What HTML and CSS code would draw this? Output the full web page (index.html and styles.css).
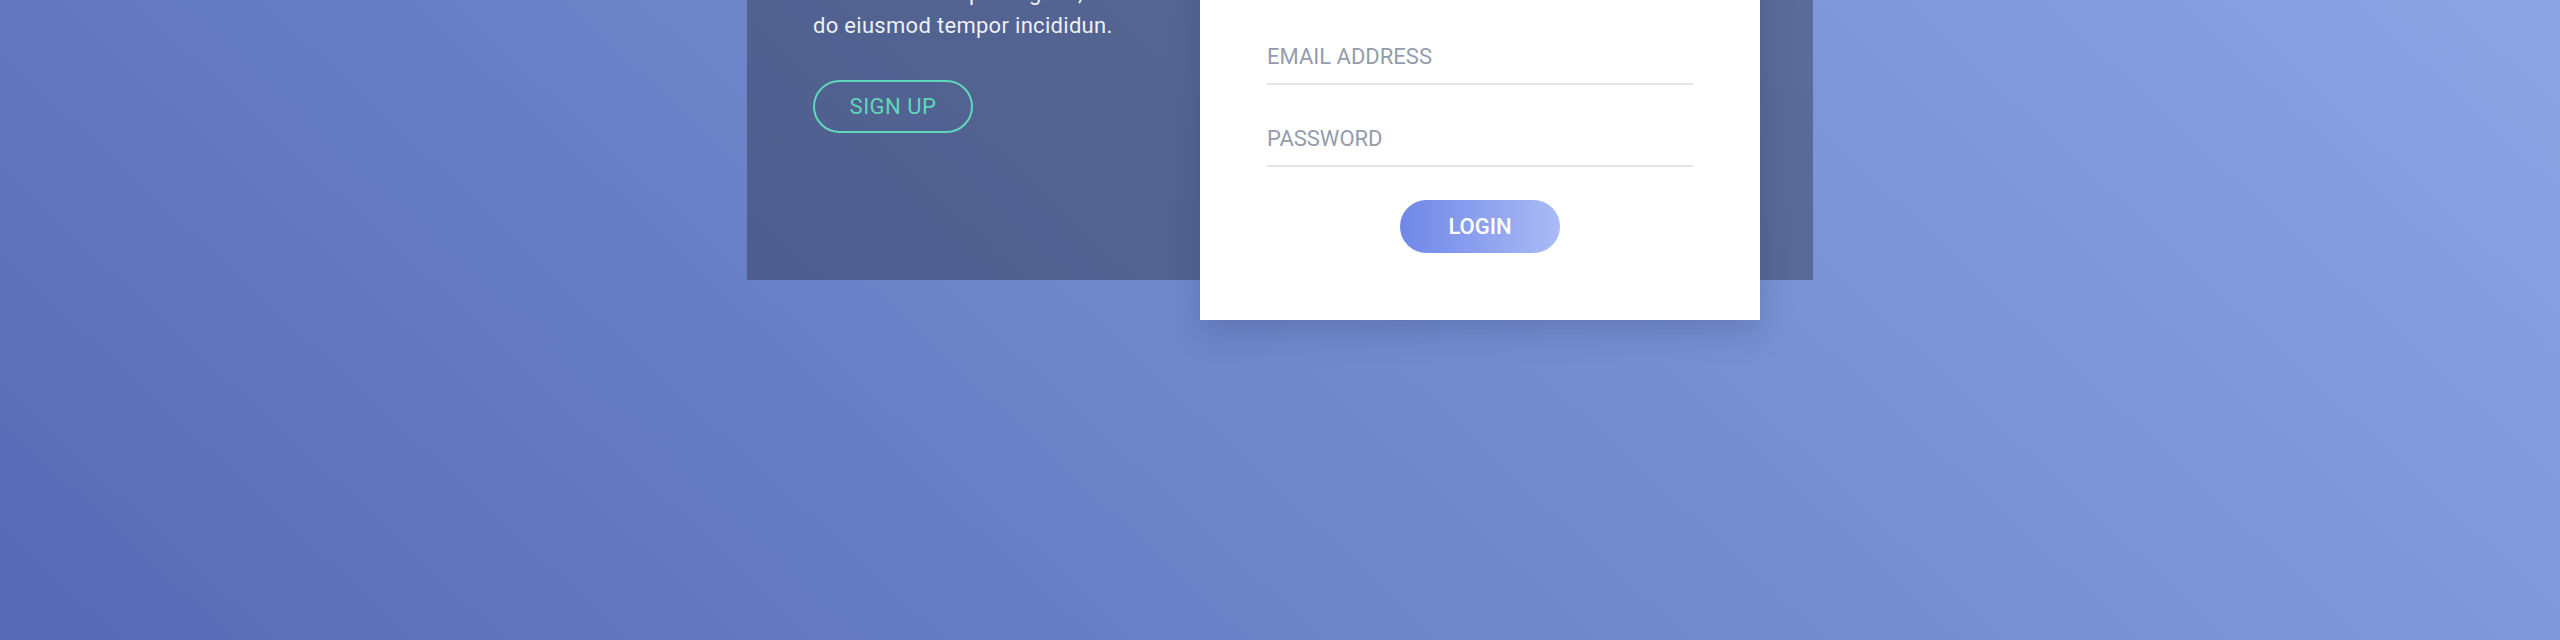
FILE: index.html
```html
<!DOCTYPE html>
<html lang="en">
<head>
    <meta charset="UTF-8">
    <meta name="viewport" content="width=device-width, initial-scale=1.0">
    <title>Login</title>
    <link rel="stylesheet" href="styles.css">
</head>
<body>
    <div class="stage">
        <div class="panel">
            <!-- Left side: sign up -->
            <div class="intro">
                <h2 class="intro-title">Don't have an account?</h2>
                <p class="intro-text">Lorem ipsum dolor sit amet, consectetur adipiscing elit, sed do eiusmod tempor incididun.</p>
                <button class="btn-outline" type="button">SIGN UP</button>
            </div>

            <!-- Login card -->
            <form class="card">
                <h2 class="card-title">LOGIN</h2>
                <p class="card-sub">Welcome back, please sign in.</p>
                <input class="field" type="email" placeholder="EMAIL ADDRESS">
                <input class="field" type="password" placeholder="PASSWORD">
                <button class="btn-primary" type="button">LOGIN</button>
            </form>
        </div>
    </div>
</body>
</html>
```

FILE: styles.css
```css
/* Page */
body {
    margin: 0;
    height: 640px;
    overflow: hidden;
    font-family: Roboto, "Liberation Sans", sans-serif;
    background: linear-gradient(43deg, #5769b5 0%, #7189cc 50%, #8ca4e4 100%);
}

.stage {
    margin-top: -157px;
}

.panel {
    display: flex;
    width: 1066px;
    margin: 0 auto;
    background-color: rgba(40, 48, 66, 0.42);
}

/* Left side */
.intro {
    flex: 1;
    padding: 40px 66px;
    color: rgba(255, 255, 255, 0.92);
}

.intro-title {
    margin: 0 0 20px;
    font-size: 30px;
    line-height: 40px;
    font-weight: 400;
}

.intro-text {
    margin: 0;
    max-width: 330px;
    font-size: 22px;
    line-height: 33px;
    letter-spacing: 0.3px;
}

.btn-outline {
    margin-top: 38px;
    width: 160px;
    height: 53px;
    border: 2px solid #5fd8b9;
    border-radius: 27px;
    background: transparent;
    color: #5fd8b9;
    font-family: inherit;
    font-size: 22px;
    font-weight: 400;
    letter-spacing: 0.5px;
    cursor: pointer;
}

/* Card */
.card {
    display: flex;
    flex-direction: column;
    width: 426px;
    margin: -40px 53px -40px 0;
    padding: 67px;
    background-color: #fff;
    box-shadow: 0 12px 30px rgba(35, 45, 95, 0.22);
}

.card-title {
    margin: 0 0 12px;
    font-size: 30px;
    line-height: 40px;
    font-weight: 500;
    color: #6f87e8;
}

.card-sub {
    margin: 0 0 78.7px;
    font-size: 20px;
    line-height: 30px;
    color: #8f96a4;
}

.field {
    display: block;
    height: 52px;
    padding: 0;
    border: none;
    border-bottom: 2px solid #e4e4e6;
    background: none;
    font-family: inherit;
    font-size: 22px;
    color: #555;
    outline: none;
}

.field + .field {
    margin-top: 28px;
}

.field::placeholder {
    color: #959cab;
}

.btn-primary {
    align-self: center;
    margin-top: 33px;
    width: 160px;
    height: 53px;
    border: none;
    border-radius: 27px;
    background: linear-gradient(to right, #6f87e8, #aabbf6);
    color: #fff;
    font-family: inherit;
    font-size: 22px;
    font-weight: 500;
    cursor: pointer;
}
```
